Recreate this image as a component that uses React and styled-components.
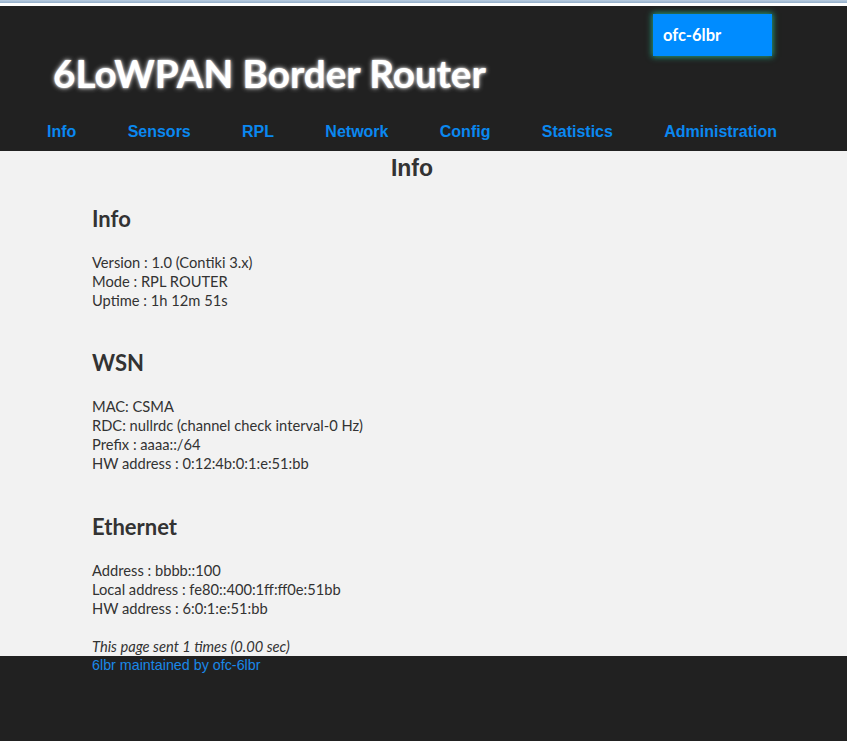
import React from "react";
import styled, { createGlobalStyle } from "styled-components";

const Global = createGlobalStyle`
  html, body { margin: 0; padding: 0; background: #ffffff; }
  body { font-family: "Lato", "Open Sans", sans-serif; }
  * { box-sizing: border-box; }
`;

const Page = styled.div`
  display: flex;
  flex-direction: column;
  min-height: 100vh;
`;

const WindowEdge = styled.div`
  height: 3px;
  background: linear-gradient(#b9cce0, #93afca);
  margin-bottom: 3px;
`;

const Header = styled.header`
  position: relative;
  background: #212121;
  display: flex;
  flex-direction: column;
`;

const Badge = styled.div`
  position: absolute;
  top: 8px;
  right: 75px;
  width: 119px;
  height: 42px;
  background: #008cff;
  box-shadow: 0 0 6px 1px rgba(40, 200, 150, 0.75);
  color: #ffffff;
  font-family: "Lato", sans-serif;
  font-weight: 700;
  font-size: 16.5px;
  display: flex;
  align-items: center;
  padding-left: 10px;
`;

const Title = styled.h1`
  margin: 44px 0 0 53px;
  font-family: "Lato", sans-serif;
  font-weight: 700;
  font-size: 38.6px;
  line-height: 46px;
  color: #ffffff;
  text-shadow: 0 0 5px rgba(255, 255, 255, 0.9), 0 0 2px rgba(255, 255, 255, 0.8);
`;

const Nav = styled.nav`
  display: flex;
  gap: 51.3px;
  align-items: center;
  height: 38px;
  margin-top: 17px;
  padding-left: 47px;
`;

const NavLink = styled.a`
  font-family: "Liberation Sans", Arial, sans-serif;
  font-weight: 700;
  font-size: 16px;
  line-height: 20px;
  color: #0a88f0;
  text-decoration: none;
`;

const Content = styled.main`
  background: #f2f2f2;
  color: #333333;
  padding: 4px 0 0 92px;
`;

const PageTitle = styled.h2`
  margin: 0 0 23.5px -92px;
  padding-right: 23px;
  text-align: center;
  font-family: "Liberation Sans", Arial, sans-serif;
  font-weight: 700;
  font-size: 23px;
  line-height: 27px;
  color: #333333;
`;

const Section = styled.section`
  margin-top: ${(p) => (p.$first ? "0" : "40.5px")};
`;

const SectionTitle = styled.h3`
  margin: 0 0 21px;
  font-family: "Lato", sans-serif;
  font-weight: 700;
  font-size: 22px;
  line-height: 26px;
  color: #333333;
`;

const Lines = styled.div`
  font-family: "Lato", sans-serif;
  font-size: 14.7px;
  line-height: 19px;
  color: #333333;
`;

const Line = styled.div`
  min-height: 19px;
  font-style: ${(p) => (p.$italic ? "italic" : "normal")};
`;

const Footer = styled.footer`
  flex: 1;
  background: #212121;
  padding-left: 92px;
`;

const FooterLink = styled.a`
  display: block;
  font-family: "Liberation Sans", Arial, sans-serif;
  font-size: 14.3px;
  line-height: 18px;
  color: #1a88e8;
  text-decoration: none;
`;

const navItems = ["Info", "Sensors", "RPL", "Network", "Config", "Statistics", "Administration"];

const sections = [
  {
    title: "Info",
    lines: ["Version : 1.0 (Contiki 3.x)", "Mode : RPL ROUTER", "Uptime : 1h 12m 51s"],
  },
  {
    title: "WSN",
    lines: [
      "MAC: CSMA",
      "RDC: nullrdc (channel check interval-0 Hz)",
      "Prefix : aaaa::/64",
      "HW address : 0:12:4b:0:1:e:51:bb",
    ],
  },
  {
    title: "Ethernet",
    lines: [
      "Address : bbbb::100",
      "Local address : fe80::400:1ff:ff0e:51bb",
      "HW address : 6:0:1:e:51:bb",
      "",
    ],
    note: "This page sent 1 times (0.00 sec)",
  },
];

export default function App() {
  return (
    <>
      <Global />
      <Page>
        <WindowEdge />
        <Header>
          <Badge>ofc-6lbr</Badge>
          <Title>6LoWPAN Border Router</Title>
          <Nav>
            {navItems.map((n) => (
              <NavLink key={n} href="#">
                {n}
              </NavLink>
            ))}
          </Nav>
        </Header>
        <Content>
          <PageTitle>Info</PageTitle>
          {sections.map((s, i) => (
            <Section key={s.title} $first={i === 0}>
              <SectionTitle>{s.title}</SectionTitle>
              <Lines>
                {s.lines.map((l, j) => (
                  <Line key={j}>{l}</Line>
                ))}
                {s.note && <Line $italic>{s.note}</Line>}
              </Lines>
            </Section>
          ))}
        </Content>
        <Footer>
          <FooterLink href="#">6lbr maintained by ofc-6lbr</FooterLink>
        </Footer>
      </Page>
    </>
  );
}
